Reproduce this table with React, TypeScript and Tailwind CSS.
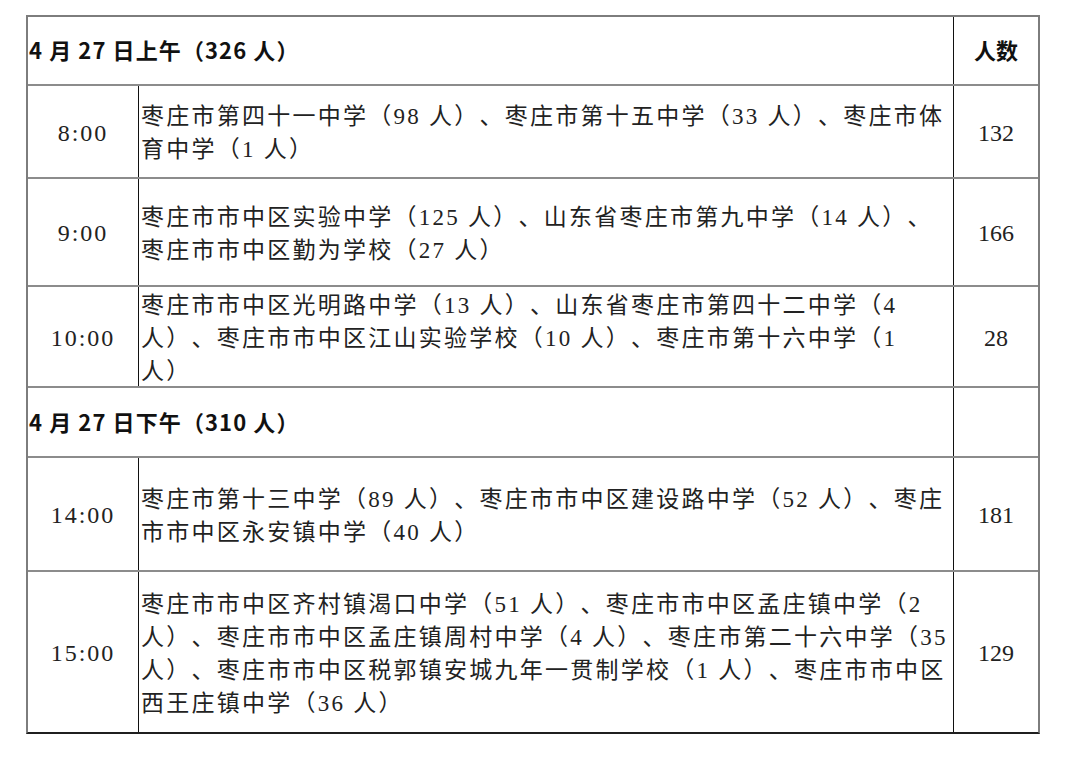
const body = '"Liberation Serif", "Noto Sans CJK SC", serif';

type Row =
  | { kind: "head"; label: string; right: string; h: string }
  | { kind: "data"; time: string; lines: string[]; count: string; h: string };

const rows: Row[] = [
  { kind: "head", label: "4 月 27 日上午（326 人）", right: "人数", h: "h-[69px]" },
  {
    kind: "data",
    time: "8:00",
    lines: [
      "枣庄市第四十一中学（98 人）、枣庄市第十五中学（33 人）、枣庄市体",
      "育中学（1 人）",
    ],
    count: "132",
    h: "h-[93px]",
  },
  {
    kind: "data",
    time: "9:00",
    lines: [
      "枣庄市市中区实验中学（125 人）、山东省枣庄市第九中学（14 人）、",
      "枣庄市市中区勤为学校（27 人）",
    ],
    count: "166",
    h: "h-[108px]",
  },
  {
    kind: "data",
    time: "10:00",
    lines: [
      "枣庄市市中区光明路中学（13 人）、山东省枣庄市第四十二中学（4",
      "人）、枣庄市市中区江山实验学校（10 人）、枣庄市第十六中学（1",
      "人）",
    ],
    count: "28",
    h: "h-[101px]",
  },
  { kind: "head", label: "4 月 27 日下午（310 人）", right: "", h: "h-[70px]" },
  {
    kind: "data",
    time: "14:00",
    lines: [
      "枣庄市第十三中学（89 人）、枣庄市市中区建设路中学（52 人）、枣庄",
      "市市中区永安镇中学（40 人）",
    ],
    count: "181",
    h: "h-[114px]",
  },
  {
    kind: "data",
    time: "15:00",
    lines: [
      "枣庄市市中区齐村镇渴口中学（51 人）、枣庄市市中区孟庄镇中学（2",
      "人）、枣庄市市中区孟庄镇周村中学（4 人）、枣庄市第二十六中学（35",
      "人）、枣庄市市中区税郭镇安城九年一贯制学校（1 人）、枣庄市市中区",
      "西王庄镇中学（36 人）",
    ],
    count: "129",
    h: "h-[160px]",
  },
];

export default function App() {
  return (
    <div className="w-[1080px] h-[757px] bg-white pt-[15px] pl-[26px]">
      {/* Schedule table */}
      <div className="w-[1014px] border-2 border-[#7d7d7d] border-b-[#1f1f1f] [text-spacing-trim:space-all]">
        {rows.map((r, i) => {
          const last = i === rows.length - 1;
          const rowCls = `flex ${r.h} ${last ? "" : "border-b-2 border-[#8c8c8c]"}`;
          if (r.kind === "head") {
            return (
              <div key={i} className={rowCls}>
                <div
                  className="flex-1 flex items-center pl-[1px] pb-[2px] text-[22px] font-bold text-[#111] tracking-[1.1px]"
                  style={{ fontFamily: '"Noto Sans CJK SC", sans-serif' }}
                >
                  {r.label}
                </div>
                <div
                  className="w-[85px] border-l border-[#111] flex items-center justify-center pb-[2px] text-[22px] font-bold text-[#111]"
                  style={{ fontFamily: '"Noto Sans CJK SC", sans-serif' }}
                >
                  {r.right}
                </div>
              </div>
            );
          }
          return (
            <div key={i} className={rowCls} style={{ fontFamily: body }}>
              <div className="w-[111px] border-r border-[#111] flex items-center justify-center pt-[2px] text-[24px] tracking-[2px] text-[#222]">
                {r.time}
              </div>
              <div className="flex-1 flex flex-col justify-center pl-[2px] pt-[3px] text-[23px] leading-[33px] tracking-[2.25px] text-[#222] whitespace-nowrap">
                {r.lines.map((l, j) => (
                  <div key={j}>{l}</div>
                ))}
              </div>
              <div className="w-[85px] border-l border-[#111] flex items-center justify-center pt-[2px] text-[24px] text-[#222]">
                {r.count}
              </div>
            </div>
          );
        })}
      </div>
    </div>
  );
}
